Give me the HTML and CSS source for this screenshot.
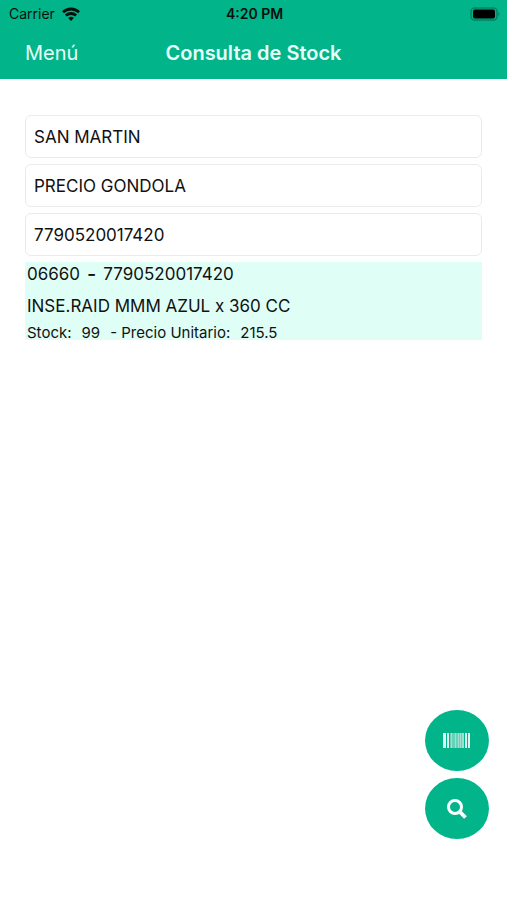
FILE: index.html
```html
<!DOCTYPE html>
<html lang="es">
<head>
  <meta charset="UTF-8">
  <meta name="viewport" content="width=device-width, initial-scale=1.0">
  <title>Consulta de Stock</title>
  <link rel="stylesheet" href="styles.css">
</head>
<body>
  <header class="header">
    <div class="status">
      <div class="carrier">
        <span>Carrier</span>
        <svg class="wifi" viewBox="0 0 18 14" fill="none" stroke="#05110d" stroke-width="2.8">
          <path d="M1 5.2a11.6 11.6 0 0 1 16 0"/>
          <path d="M3.9 8.6a7.3 7.3 0 0 1 10.2 0"/>
          <path d="M9 14L6.2 11.100a4 4 0 0 1 5.600 0z" fill="#05110d" stroke="none"/>
        </svg>
      </div>
      <span class="clock">4:20 PM</span>
      <svg class="battery" viewBox="0 0 30 14">
        <rect x="1" y="1" width="26" height="12" rx="3.5" fill="none" stroke="#05805f" stroke-width="1.4"/>
        <rect x="3" y="2.500" width="22" height="9" rx="2" fill="#000"/>
        <path d="M28.3 5v4c1.6-.8 1.6-3.2 0-4z" fill="#05805f"/>
      </svg>
    </div>
    <nav class="navbar">
      <a href="#" class="menu">Menú</a>
      <h1 class="title">Consulta de Stock</h1>
    </nav>
  </header>

  <main class="content">
    <form class="filtros" id="consulta">
      <select class="campo" aria-label="Sucursal">
        <option>SAN MARTIN</option>
      </select>
      <select class="campo" aria-label="Lista de precios">
        <option>PRECIO GONDOLA</option>
      </select>
      <input class="campo" type="text" inputmode="numeric" aria-label="Código" value="7790520017420">
    </form>

    <section class="producto">
      <p class="codigo"><span>06660</span><span class="guion">-</span><span>7790520017420</span></p>
      <p class="descripcion">INSE.RAID MMM AZUL x 360 CC</p>
      <p class="detalle"><span>Stock:</span><span>99</span><span>- Precio Unitario:</span><span>215.5</span></p>
    </section>
  </main>

  <div class="acciones">
    <button type="button" class="boton" aria-label="Escanear">
      <svg class="barras" viewBox="0 0 28 16" fill="#fff">
        <path d="M0 0h3v15H0zM4 0h2v15H4zM22 0h2v15h-2zM25 0h2v15h-2z" opacity=".85"/>
        <path d="M7 0h14v15H7z" opacity=".4"/>
        <path d="M8 0h1v15H8zM12 0h1v15h-1zM15 0h1v15h-1zM17 0h1v15h-1zM19 0h2v15h-2z" opacity=".35"/>
      </svg>
    </button>
    <button type="submit" form="consulta" class="boton" aria-label="Buscar">
      <svg class="lupa" viewBox="0 0 20 20" fill="none" stroke="#fff" stroke-width="3">
        <circle cx="8" cy="8" r="6.5"/>
        <path d="M12.5 12.5l6 6" stroke-width="3.8"/>
      </svg>
    </button>
  </div>
</body>
</html>
```

FILE: styles.css
```css
* {
  box-sizing: border-box;
}
body {
  margin: 0;
  font-family: Inter, "Liberation Sans", sans-serif;
  background: #fff;
  color: #111;
}
.header {
  background: #02b489;
}
.status {
  display: grid;
  grid-template-columns: 1fr auto 1fr;
  align-items: center;
  height: 27px;
  padding: 0 7px 0 9px;
  font-size: 14px;
  color: #05110d;
}
.carrier {
  display: flex;
  align-items: center;
  gap: 7px;
}
.wifi {
  width: 18px;
  height: 14px;
}
.clock {
  font-weight: 600;
}
.battery {
  width: 30px;
  height: 14px;
  justify-self: end;
}
.navbar {
  display: grid;
  grid-template-columns: 1fr auto 1fr;
  align-items: center;
  height: 52px;
  padding: 0 25px;
}
.menu {
  color: #e6fff8;
  font-size: 20px;
  text-decoration: none;
}
.title {
  margin: 0;
  color: #e6fff8;
  font-size: 20px;
  font-weight: 600;
}
.content {
  padding: 36px 25px;
}
.filtros {
  display: flex;
  flex-direction: column;
  gap: 6px;
}
.campo {
  appearance: none;
  width: 100%;
  height: 43px;
  margin: 0;
  padding: 0 8px;
  border: 1px solid #ebebeb;
  border-radius: 6px;
  background: #fff;
  color: #111;
  font-family: inherit;
  font-size: 17px;
}
.producto {
  margin-top: 6px;
  padding: 0 2px;
  background: #dffff6;
}
.producto p {
  margin: 0;
}
.codigo {
  display: flex;
  align-items: center;
  gap: 7px;
  font-size: 17px;
  line-height: 24px;
}
.guion {
  font-size: 20px;
  font-weight: 500;
}
.descripcion {
  font-size: 17px;
  line-height: 40px;
}
.detalle {
  display: flex;
  gap: 10px;
  font-size: 15px;
  line-height: 14px;
}
.acciones {
  position: fixed;
  right: 18px;
  bottom: 61px;
  display: flex;
  flex-direction: column;
  gap: 7px;
}
.boton {
  display: flex;
  align-items: center;
  justify-content: center;
  width: 64px;
  height: 61px;
  padding: 0;
  border: none;
  border-radius: 50%;
  background: #02b489;
}
.barras {
  width: 28px;
  height: 16px;
}
.lupa {
  width: 20px;
  height: 20px;
}
```
